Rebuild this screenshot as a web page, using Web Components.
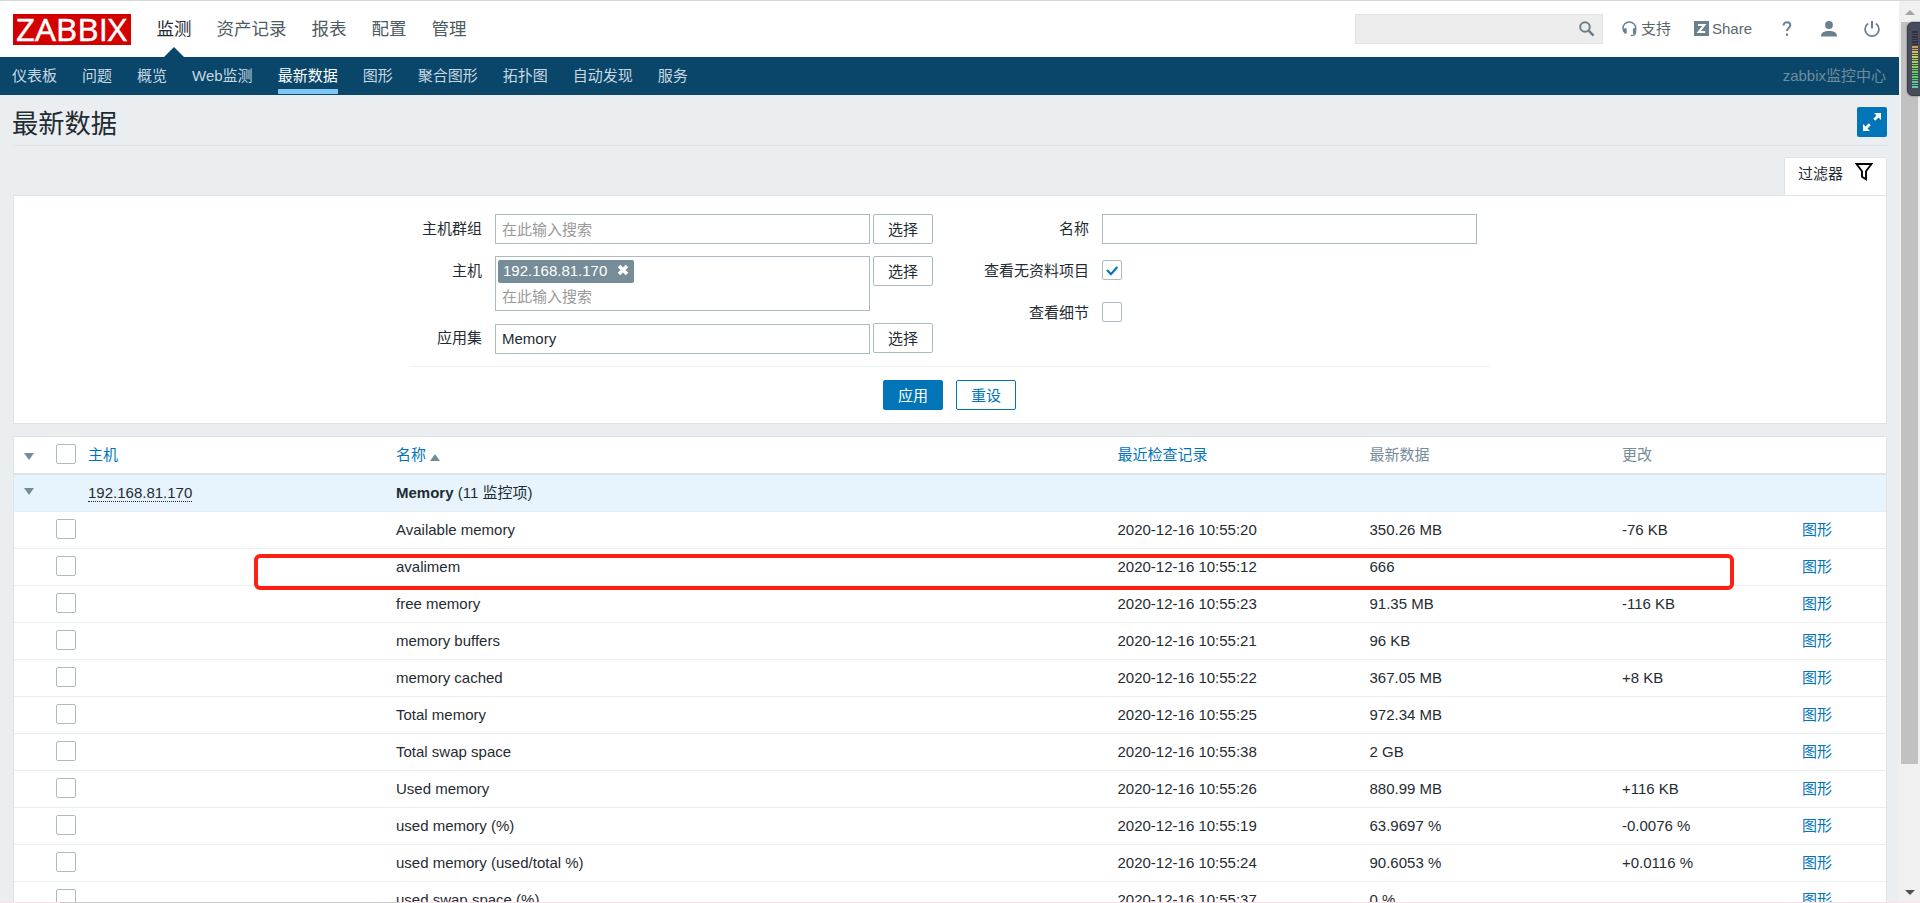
<!DOCTYPE html>
<html lang="zh-CN">
<head>
<meta charset="utf-8">
<title>最新数据</title>
<style>
html,body{margin:0;height:903px;overflow:hidden}
body{font:15px/18px "Liberation Sans","Noto Sans CJK SC",sans-serif;color:#1f2c33;background:#ebeef0}
</style>
</head>
<body>
<zbx-app></zbx-app>
<script>
const define = (name, css, html) => customElements.define(name, class extends HTMLElement {
  constructor() {
    super();
    const t = document.createElement('template');
    const body = typeof html === 'function' ? html(this) : html;
    t.innerHTML = `<style>*{box-sizing:border-box}${css}</style>${body}`;
    this.attachShadow({mode: 'open'}).append(t.content.cloneNode(true));
  }
});

const ICONS = {
  search: [16, 16, '<circle cx="6" cy="6" r="4.8" fill="none" stroke="currentColor" stroke-width="2"/><path d="M9.6 9.6l5 5" stroke="currentColor" stroke-width="2.6"/>'],
  support: [15, 16, '<path d="M3.2 12C1.7 10.8 1 9.2 1 7.3 1 3.8 3.8 1 7.3 1s6.4 2.8 6.4 6.3v2.5M13.5 11c0 2.300-1.700 3.600-4.700 3.600" fill="none" stroke="currentColor" stroke-width="1.5"/><path d="M2.300 7.200h1.500q.9 0 .9 1v3.600q0 1-.9 1H3.200L1.300 10.500zM13.300 7.200h-1.500q-.9 0-.9 1v3.600q0 1 .9 1h1.500l1-1.800z" fill="currentColor"/>'],
  share: [15, 15, '<path d="M0 0h15v15H0z" fill="currentColor"/><path d="M4 4.100h6.300L4.700 11H11.200" fill="none" stroke="#fff" stroke-width="2"/>'],
  help: [10, 16, '<path d="M1.500 4.500C1.500 2.500 2.900 1.200 4.900 1.200s3.400 1.200 3.400 3c0 2.500-3.300 3-3.300 5.800" fill="none" stroke="currentColor" stroke-width="2"/><path d="M3.900 12.500h2.200v2.300H3.900z" fill="currentColor"/>'],
  user: [16, 16, '<circle cx="8" cy="4" r="3.900" fill="currentColor"/><path d="M0 15.500c0-4 3-5.500 8-5.500s8 1.500 8 5.500z" fill="currentColor"/>'],
  power: [16, 16, '<path d="M4.200 2.500a6.900 6.900 0 1 0 7.600 0" fill="none" stroke="currentColor" stroke-width="1.700"/><path d="M8 0v7.500" stroke="currentColor" stroke-width="2"/>'],
  expand: [20, 20, '<path d="M12 1h7v7l-2.500-2.500-3.300 3.200-1.900-1.900L14.500 3.500zM1 19v-7l2.500 2.500 3.300-3.200 1.900 1.900-3.200 3.300L8 19z" fill="currentColor"/>'],
  funnel: [18, 18, '<path d="M1.500 1h15L11 8.300v8L7 13.800V8.300z" fill="none" stroke="currentColor" stroke-width="1.900"/>'],
  close: [12, 12, '<path d="M2 2l8 8M10 2l-8 8" stroke="currentColor" stroke-width="3.600"/>'],
  down: [10, 7, '<path d="M0 0h10L5 7z" fill="currentColor"/>'],
  up: [10, 7, '<path d="M0 7h10L5 0z" fill="currentColor"/>'],
  check: [12, 10, '<path d="M1 4l4 4.200L11.300 1" fill="none" stroke="currentColor" stroke-width="2.200"/>']
};
define('zbx-icon', ':host{display:block;flex:none}svg{display:block}', el => {
  const [w, h, p] = ICONS[el.getAttribute('name')];
  return `<svg width="${w}" height="${h}" viewBox="0 0 ${w} ${h}">${p}</svg>`;
});

define('zbx-logo', ':host{display:block;width:118px;height:31px;background:#d40000}svg{display:block}',
  '<svg width="118" height="31"><text x="3" y="26.500" font-family="Open Sans" font-size="31" textLength="111" lengthAdjust="spacingAndGlyphs" fill="#fff" stroke="#fff" stroke-width=".5">ZABBIX</text></svg>');

define('zbx-nav-item', `:host{display:block;position:relative;height:56px;line-height:56px;font-size:17.5px;color:#4f5b62}
  :host([active]){color:#1f2c33}
  :host([active])::after{content:"";position:absolute;left:50%;bottom:0;margin-left:-10px;border:10px solid transparent;border-top:0;border-bottom-color:#0a466a}`, '<slot></slot>');

define('zbx-header', `:host{display:flex;height:57px;background:#fff;border-top:1px solid #d6d8dd;padding-left:13px;color:#6b808d}
  zbx-logo{margin-top:13px}
  nav{display:flex;gap:25px;margin-left:25.5px}
  .search{margin:13px 0 0 auto;width:248px;height:30px;background:#ededed;border:1px solid #dfe4e7;display:flex;justify-content:flex-end;padding:6px 7px 0 0}
  .tools{display:flex;width:296px;padding-left:19px;align-items:flex-start;color:#6b808d}
  .tools>*{margin-top:20px}.tools span{line-height:18px;color:#5a676e}
  .tools .sup{margin:19px 23px 0 4px}.tools .shr{margin:19px 30px 0 3px}
  .user{margin-left:29px}.power{margin-left:27px}`,
  `<zbx-logo></zbx-logo>
  <nav><zbx-nav-item active>监测</zbx-nav-item><zbx-nav-item>资产记录</zbx-nav-item><zbx-nav-item>报表</zbx-nav-item><zbx-nav-item>配置</zbx-nav-item><zbx-nav-item>管理</zbx-nav-item></nav>
  <div class="search"><zbx-icon name="search"></zbx-icon></div>
  <div class="tools"><zbx-icon name="support"></zbx-icon><span class="sup">支持</span><zbx-icon name="share"></zbx-icon><span class="shr">Share</span><zbx-icon name="help"></zbx-icon><zbx-icon class="user" name="user"></zbx-icon><zbx-icon class="power" name="power"></zbx-icon></div>`);

define('zbx-subnav', `:host{display:flex;height:38px;gap:25px;padding:0 13px 0 12px;background:#0a466a;color:#c8d8e2;line-height:37px}
  .on{color:#fff;box-shadow:inset 0 -1px #0a466a,inset 0 -6px #80c6f3}
  .name{margin-left:auto;color:#6f8d9f}`,
  ['仪表板','问题','概览','Web监测','最新数据','图形','聚合图形','拓扑图','自动发现','服务']
    .map(t => `<span${t === '最新数据' ? ' class="on"' : ''}>${t}</span>`).join('') + '<span class="name">zabbix监控中心</span>');

define('zbx-title', `:host{display:flex;height:51px;margin:0 12px 0 13px;border-bottom:1px solid #dfe4e7;justify-content:space-between}
  h1{margin:0 0 0 -1px;font-weight:400;font-size:26.25px;line-height:58px}
  div{width:30px;height:30px;margin-top:12px;border-radius:2px;background:#0275b8;color:#fff;display:flex;align-items:center;justify-content:center}`,
  '<h1><slot></slot></h1><div><zbx-icon name="expand"></zbx-icon></div>');

define('zbx-button', `:host{display:block;flex:none;width:60px;height:30px;border:1px solid #acbbc2;border-radius:2px;text-align:center;line-height:30px;background:#fff}
  :host([kind=primary]){background:#0275b8;border-color:#0275b8;color:#fff}
  :host([kind=alt]){border-color:#0275b8;color:#0275b8}`, '<slot></slot>');

define('zbx-input', `:host{display:block;flex:none;width:375px;height:30px;border:1px solid #acbbc2;background:#fff;padding-left:6px;line-height:28px}
  .ph{color:#9a9a9a;line-height:30px}:host([tall]){height:55px;padding:3px 0 0 2px}
  :host([tall]) .ph{line-height:27px;padding-left:4px}`,
  el => '<slot></slot>' + (el.hasAttribute('placeholder') ? `<div class="ph">${el.getAttribute('placeholder')}</div>` : ''));

define('zbx-chip', `:host{display:flex;width:136px;height:23px;border-radius:2px;background:#768d99;color:#fff;padding-left:5px;line-height:21px;justify-content:space-between}
  zbx-icon{margin:4px 5px 0 0}`, '<slot></slot><zbx-icon name="close"></zbx-icon>');

define('zbx-checkbox', `:host{display:flex;flex:none;width:20px;height:20px;border:1px solid #acbbc2;border-radius:2px;background:#fff;color:#0275b8;align-items:center;justify-content:center}
  zbx-icon{margin-top:2px}`,
  el => el.hasAttribute('checked') ? '<zbx-icon name="check"></zbx-icon>' : '');

define('zbx-field', `:host{display:flex;align-items:flex-start;gap:3px}
  label{width:var(--label,72px);margin-right:10px;text-align:right;line-height:30px;white-space:nowrap}`,
  el => `<label>${el.getAttribute('label')}</label><slot></slot>`);

define('zbx-filter', `:host{display:block;margin:11px 12px 0 13px}
  .tab{position:relative;width:103px;height:39px;margin:0 0 -1px auto;background:#fff;border:1px solid #dfe4e7;border-radius:2px 2px 0 0;display:flex;padding:0 0 0 13px;line-height:32px}
  .tab zbx-icon{margin:5px 0 0 12px;color:#000}
  .panel{height:229px;background:#fff;border:1px solid #dfe4e7}
  .cols{display:flex;justify-content:space-between;width:1079px;height:171px;margin:0 auto 0 396px;padding:18px 12px 0 0;border-bottom:1px solid #ebeef0}
  .left,.right{display:flex;flex-direction:column;gap:12px}
  .right{--label:130px}
  .app zbx-input{margin-top:1px}.right zbx-checkbox{margin:4px 355px 6px 0}
  .actions{display:flex;gap:13px;padding:13px 0 0 869px}`,
  `<div class="tab">过滤器<zbx-icon name="funnel"></zbx-icon></div>
  <div class="panel"><div class="cols"><div class="left">
    <zbx-field label="主机群组"><zbx-input placeholder="在此输入搜索"></zbx-input><zbx-button>选择</zbx-button></zbx-field>
    <zbx-field label="主机"><zbx-input tall placeholder="在此输入搜索"><zbx-chip>192.168.81.170</zbx-chip></zbx-input><zbx-button>选择</zbx-button></zbx-field>
    <zbx-field class="app" label="应用集"><zbx-input>Memory</zbx-input><zbx-button>选择</zbx-button></zbx-field>
  </div><div class="right">
    <zbx-field label="名称"><zbx-input></zbx-input></zbx-field>
    <zbx-field label="查看无资料项目"><zbx-checkbox checked></zbx-checkbox></zbx-field>
    <zbx-field label="查看细节"><zbx-checkbox></zbx-checkbox></zbx-field>
  </div></div>
  <div class="actions"><zbx-button kind="primary">应用</zbx-button><zbx-button kind="alt">重设</zbx-button></div></div>`);

define('zbx-row', `:host{display:grid;grid-template-columns:42px 32px 308px 721.5px 252px 252.5px 180px 1fr;height:37px;border-bottom:1px solid #ebeef0;background:#fff;line-height:36px;white-space:nowrap}
  :host([head]){height:38px;border-bottom:2px solid #dce2e5;color:#768d99}
  :host([group]){background:#e8f4fd}
  ::slotted(zbx-checkbox){margin-top:7px}
  ::slotted(.tri){color:#768d99;margin:13px 0 0 10px}
  ::slotted(.first){margin-top:16px}
  ::slotted(.link){color:#0275b8}`, '<slot></slot>');

const DATA = [
  ['Available memory','20','350.26 MB','-76 KB'],['avalimem','12','666',''],['free memory','23','91.35 MB','-116 KB'],
  ['memory buffers','21','96 KB',''],['memory cached','22','367.05 MB','+8 KB'],['Total memory','25','972.34 MB',''],
  ['Total swap space','38','2 GB',''],['Used memory','26','880.99 MB','+116 KB'],['used memory (%)','19','63.9697 %','-0.0076 %'],
  ['used memory (used/total %)','24','90.6053 %','+0.0116 %'],['used swap space (%)','37','0 %','']];
define('zbx-table', `:host{display:block;margin:12px 12px 0 13px;border:1px solid #dfe4e7}
  .sort{display:flex;gap:4px}.sort zbx-icon{margin-top:17px;color:#768d99}
  .host{justify-self:start;height:17px;margin-top:10px;line-height:15px;border-bottom:1px dotted #1f2c33}`,
  `<zbx-row head><zbx-icon class="tri first" name="down"></zbx-icon><zbx-checkbox></zbx-checkbox><span class="link">主机</span><span class="link sort">名称<zbx-icon name="up"></zbx-icon></span><span class="link">最近检查记录</span><span>最新数据</span><span>更改</span></zbx-row>
  <zbx-row group><zbx-icon class="tri" name="down"></zbx-icon><span></span><span class="host">192.168.81.170</span><span><b>Memory</b> (11 监控项)</span></zbx-row>` +
  DATA.map(([n, s, v, c]) => `<zbx-row><span></span><zbx-checkbox></zbx-checkbox><span></span><span>${n}</span><span>2020-12-16 10:55:${s}</span><span>${v}</span><span>${c}</span><span class="link">图形</span></zbx-row>`).join(''));

define('zbx-scrollbar', `:host{display:flex;flex-direction:column;align-items:center;width:21px;height:903px;background:#f0f0f0;border-top:1px solid #d6d8dd;padding:9px 2px 8px}
  .up{color:#a3a3a3;height:5px}.thumb{width:17px;height:742px;margin-top:7px;background:#c1c1c1}.dn{color:#505050;margin-top:auto}
  svg{display:block;flex:none}`,
  `<svg class="up" width="10" height="5"><path d="M0 5h10L5 0z" fill="currentColor"/></svg><div class="thumb"></div><svg class="dn" width="10" height="5"><path d="M0 0h10L5 5z" fill="currentColor"/></svg>`);

define('zbx-meter', `:host{position:absolute;left:1907px;top:22px;width:15px;height:74px;border-radius:6px 0 0 6px;background:#484b5c;border:1px solid #3a3c4a;padding:8px 0 0 4px;box-shadow:0 0 2px #555}
  i{display:block;width:6px;height:1.5px;margin-bottom:1px}`,
  Array.from({length: 23}, (_, k) => `<i style="background:${k < 6 ? '#303240' : `hsl(${35 + (k - 6) * 8},58%,58%)`}"></i>`).join(''));

define('zbx-marker', ':host{position:absolute;left:253.5px;top:553.5px;width:1480px;height:36.500px;border:4px solid #ff2014;border-radius:6px}', '');

define('zbx-app', `:host{display:flex;position:relative;width:1920px;height:903px;overflow:hidden}
  main{width:1899px;height:903px;overflow:hidden}
  .edge{position:absolute;left:0;bottom:0;width:100%;height:1px;background:linear-gradient(90deg,#f6e1e8 60px,#c9c9cb 60px 400px,#f6e1e8 400px)}`,
  `<main><zbx-header></zbx-header><zbx-subnav></zbx-subnav><zbx-title>最新数据</zbx-title><zbx-filter></zbx-filter><zbx-table></zbx-table></main>
  <zbx-scrollbar></zbx-scrollbar><zbx-meter></zbx-meter><zbx-marker></zbx-marker><div class="edge"></div>`);
</script>
</body>
</html>
